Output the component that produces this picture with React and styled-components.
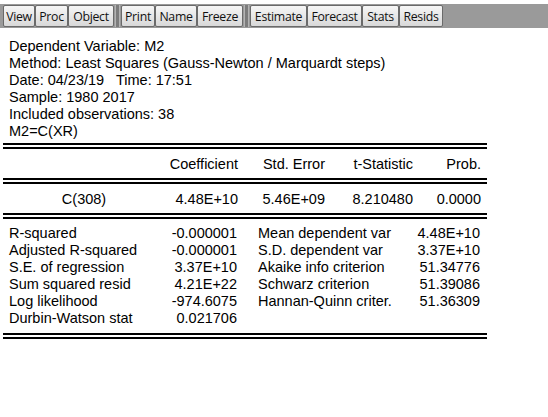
import styled, { createGlobalStyle } from 'styled-components';

const GlobalStyle = createGlobalStyle`
  html, body {
    margin: 0;
    padding: 0;
    background: #fff;
  }
  body {
    font-family: 'Liberation Sans', Arial, sans-serif;
    color: #000;
  }
`;

const toolbarGroups = [
  [
    { label: 'View', w: 32 },
    { label: 'Proc', w: 33 },
    { label: 'Object', w: 46 },
  ],
  [
    { label: 'Print', w: 34 },
    { label: 'Name', w: 42 },
    { label: 'Freeze', w: 46 },
  ],
  [
    { label: 'Estimate', w: 57 },
    { label: 'Forecast', w: 55 },
    { label: 'Stats', w: 37 },
    { label: 'Resids', w: 44 },
  ],
];

const headerLines = [
  'Dependent Variable: M2',
  'Method: Least Squares (Gauss-Newton / Marquardt steps)',
  'Date: 04/23/19   Time: 17:51',
  'Sample: 1980 2017',
  'Included observations: 38',
  'M2=C(XR)',
];

const stats = [
  ['R-squared', '-0.000001', 'Mean dependent var', '4.48E+10'],
  ['Adjusted R-squared', '-0.000001', 'S.D. dependent var', '3.37E+10'],
  ['S.E. of regression', '3.37E+10', 'Akaike info criterion', '51.34776'],
  ['Sum squared resid', '4.21E+22', 'Schwarz criterion', '51.39086'],
  ['Log likelihood', '-974.6075', 'Hannan-Quinn criter.', '51.36309'],
  ['Durbin-Watson stat', '0.021706', '', ''],
];

export default function App() {
  return (
    <>
      <GlobalStyle />
      <Window>
        <Toolbar>
          {toolbarGroups.map((group, gi) => (
            <Group key={gi}>
              {gi > 0 && <Separator />}
              {group.map((b) => (
                <ToolButton key={b.label} $w={b.w}>
                  {b.label}
                </ToolButton>
              ))}
            </Group>
          ))}
        </Toolbar>

        <Report>
          <Heading>
            {headerLines.map((line) => (
              <HeadLine key={line}>{line}</HeadLine>
            ))}
          </Heading>

          <DoubleRule />
          <CoefRow>
            <Cell $center />
            <Cell>Coefficient</Cell>
            <Cell>Std. Error</Cell>
            <Cell>t-Statistic</Cell>
            <Cell>Prob.</Cell>
          </CoefRow>
          <DoubleRule />
          <CoefRow>
            <Cell $center>C(308)</Cell>
            <Cell>4.48E+10</Cell>
            <Cell>5.46E+09</Cell>
            <Cell>8.210480</Cell>
            <Cell>0.0000</Cell>
          </CoefRow>
          <DoubleRule />

          <StatsGrid>
            {stats.map(([l1, v1, l2, v2]) => (
              <StatRow key={l1}>
                <StatLabel>{l1}</StatLabel>
                <StatValue>{v1}</StatValue>
                <StatLabel $indent>{l2}</StatLabel>
                <StatValue>{v2}</StatValue>
              </StatRow>
            ))}
          </StatsGrid>
          <DoubleRule />
        </Report>
      </Window>
    </>
  );
}

// 전체 창
const Window = styled.div`
  width: 548px;
  height: 417px;
  background: #fff;
  padding-top: 4px;
  box-sizing: border-box;
`;

// 상단 툴바
const Toolbar = styled.div`
  display: flex;
  align-items: stretch;
  height: 24px;
  background: #9a9a9a;
  padding: 1px 0 1px 3px;
  box-sizing: border-box;
`;

const Group = styled.div`
  display: flex;
  align-items: stretch;
`;

const Separator = styled.div`
  width: 3px;
  margin: 0 1px;
  background: #7c7c7c;
  border-left: 1px solid #b4b4b4;
  border-right: 1px solid #b4b4b4;
  box-sizing: content-box;
`;

const ToolButton = styled.div`
  width: ${(p) => p.$w}px;
  box-sizing: border-box;
  display: flex;
  align-items: center;
  justify-content: center;
  border: 1px solid #6a6a6a;
  border-radius: 2px;
  background: linear-gradient(#f6f6f6, #e4e4e4 60%, #d8d8d8);
  font-family: 'Open Sans', 'Noto Sans', sans-serif;
  font-size: 12.3px;
  letter-spacing: -0.3px;
  color: #111;
  white-space: nowrap;
`;

// 회귀 결과 출력
const Report = styled.div`
  width: 484px;
  margin: 10px 0 0 3px;
  font-size: 14.5px;
`;

const Heading = styled.div`
  padding-left: 6px;
  margin-bottom: 3px;
`;

const HeadLine = styled.div`
  line-height: 17px;
  white-space: pre;
`;

const DoubleRule = styled.div`
  height: 2px;
  border-top: 2px solid #000;
  border-bottom: 2px solid #000;
`;

const CoefRow = styled.div`
  display: grid;
  grid-template-columns: 162px 73px 87px 88px 68px;
  align-items: center;
  height: 29px;
`;

const Cell = styled.div`
  text-align: ${(p) => (p.$center ? 'center' : 'right')};
  white-space: nowrap;
`;

const StatsGrid = styled.div`
  padding: 6px 7px 6px 6px;
`;

const StatRow = styled.div`
  display: grid;
  grid-template-columns: 150px 78px 1fr 80px;
  line-height: 17px;
`;

const StatLabel = styled.div`
  padding-left: ${(p) => (p.$indent ? '21px' : '0')};
  white-space: nowrap;
`;

const StatValue = styled.div`
  text-align: right;
  white-space: nowrap;
`;
